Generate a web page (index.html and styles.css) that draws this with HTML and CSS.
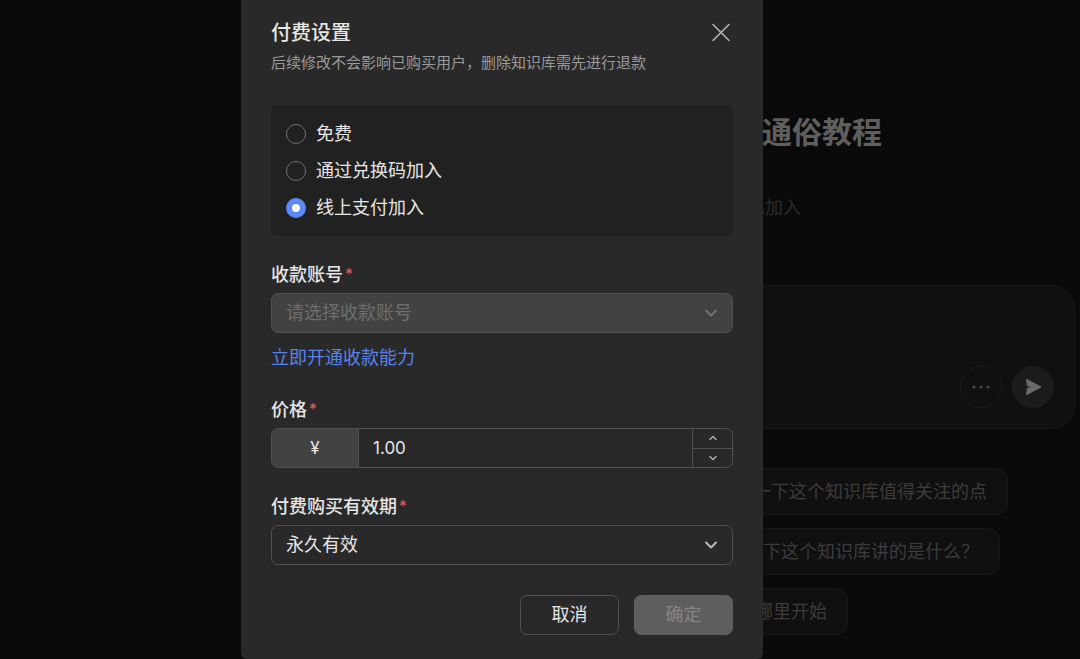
FILE: index.html
```
<!DOCTYPE html>
<html lang="zh-CN">
  <head>
    <meta charset="UTF-8" />
    <meta name="viewport" content="width=device-width, initial-scale=1.0" />
    <title>付费设置</title>
    <link rel="stylesheet" href="styles.css">
  </head>
  <body>
    <main class="page">
      <h1 class="page-title">通俗教程</h1>
      <p class="page-status">已加入</p>
      <div class="composer">
        <button type="button" class="round-button" aria-label="更多">
          <svg width="20" height="20" viewBox="0 0 20 20" fill="currentColor">
            <circle cx="3" cy="10" r="1.5" />
            <circle cx="10" cy="10" r="1.5" />
            <circle cx="17" cy="10" r="1.5" />
          </svg>
        </button>
        <button type="button" class="round-button send" aria-label="发送">
          <svg width="20" height="20" viewBox="0 0 20 20" fill="currentColor" stroke="currentColor" stroke-width="1" stroke-linejoin="round">
            <path d="M3.5 2.3L18 10L3.5 17.7L4.5 11.2L12 10L4.5 8.8Z" />
          </svg>
        </button>
      </div>
      <div class="suggestions">
        <button type="button" class="chip chip-long">一下这个知识库值得关注的点</button>
        <button type="button" class="chip chip-medium">一下这个知识库讲的是什么？</button>
        <button type="button" class="chip chip-short">哪里开始</button>
      </div>
    </main>

    <div class="overlay">
      <form class="dialog" role="dialog" aria-labelledby="dialogTitle">
        <div class="dialog-header">
          <h2 id="dialogTitle">付费设置</h2>
          <button type="button" class="close-button" aria-label="关闭">
            <svg width="20" height="20" viewBox="0 0 20 20" fill="none" stroke="currentColor" stroke-width="1.6" stroke-linecap="round">
              <path d="M2 1.5L18 17.5M18 1.5L2 17.5" />
            </svg>
          </button>
        </div>
        <p class="dialog-hint">后续修改不会影响已购买用户，删除知识库需先进行退款</p>

        <div class="options">
          <label class="option"><input type="radio" name="payType" value="free" />免费</label>
          <label class="option"><input type="radio" name="payType" value="code" />通过兑换码加入</label>
          <label class="option"><input type="radio" name="payType" value="online" checked />线上支付加入</label>
        </div>

        <div class="field">
          <label for="account">收款账号<span class="required">*</span></label>
          <div class="select-box">
            <select id="account" disabled>
              <option>请选择收款账号</option>
            </select>
            <svg class="arrow" width="14" height="14" viewBox="0 0 14 14">
              <path d="M2 4.5L7 9.5L12 4.5" />
            </svg>
          </div>
          <a class="field-link" href="#">立即开通收款能力</a>
        </div>

        <div class="field">
          <label for="price">价格<span class="required">*</span></label>
          <div class="price-box">
            <span class="currency">¥</span>
            <input type="text" id="price" inputmode="decimal" value="1.00" />
            <div class="stepper">
              <button type="button" aria-label="增加">
                <svg width="10" height="6" viewBox="0 0 10 6"><path d="M1.5 4.8L5 1.4L8.5 4.8" /></svg>
              </button>
              <button type="button" aria-label="减少">
                <svg width="10" height="6" viewBox="0 0 10 6"><path d="M1.5 1.2L5 4.6L8.5 1.2" /></svg>
              </button>
            </div>
          </div>
        </div>

        <div class="field">
          <label for="period">付费购买有效期<span class="required">*</span></label>
          <div class="select-box">
            <select id="period">
              <option>永久有效</option>
            </select>
            <svg class="arrow" width="14" height="14" viewBox="0 0 14 14">
              <path d="M2 4.5L7 9.5L12 4.5" />
            </svg>
          </div>
        </div>

        <div class="actions">
          <button type="button" class="action-button">取消</button>
          <button type="submit" class="action-button confirm" disabled>确定</button>
        </div>
      </form>
    </div>
  </body>
</html>
```
FILE: styles.css
```
* {
  box-sizing: border-box;
}
body {
  margin: 0;
  min-height: 100vh;
  background-color: #0a0a0a;
  color: #e6e6e6;
  font-family: Inter, "Noto Sans CJK SC", sans-serif;
  font-size: 18px;
  line-height: 24px;
}
h1,
h2,
p {
  margin: 0;
}
button,
input,
select {
  margin: 0;
  font: inherit;
  color: inherit;
}
button {
  padding: 0;
  border: none;
  background: none;
  cursor: pointer;
}
svg {
  display: block;
}

/* page behind the dialog */
.page {
  padding: 112px 5px 0 720px;
}
.page-title {
  padding-left: 42px;
  font-size: 30px;
  line-height: 40px;
  color: #5e5e5e;
  white-space: nowrap;
}
.page-status {
  margin-top: 44px;
  padding-left: 27px;
  color: #2c2c2c;
}
.composer {
  display: flex;
  justify-content: flex-end;
  align-items: flex-end;
  gap: 10px;
  min-height: 144px;
  margin-top: 65px;
  padding: 20px;
  border: 1px solid #181818;
  border-radius: 24px;
  background-color: #101010;
}
.round-button {
  display: flex;
  justify-content: center;
  align-items: center;
  width: 42px;
  height: 42px;
  border: 1px solid #1d1d1d;
  border-radius: 50%;
  color: #484848;
}
.round-button.send {
  background-color: #1c1c1c;
  color: #6a6a6a;
}
.suggestions {
  display: flex;
  flex-direction: column;
  align-items: flex-start;
  gap: 13px;
  margin-top: 39px;
}
.chip {
  height: 47px;
  padding: 0 20px;
  border: 1px solid #181818;
  border-radius: 12px;
  background-color: #101010;
  color: #3c3c3c;
  text-align: right;
  white-space: nowrap;
}
.chip-long {
  min-width: 288px;
}
.chip-medium {
  min-width: 280px;
}
.chip-short {
  min-width: 128px;
}

/* dialog */
.overlay {
  position: fixed;
  inset: 0;
  display: flex;
  justify-content: center;
  align-items: flex-start;
  padding-right: 76px;
  overflow: auto;
}
.dialog {
  width: 522px;
  padding: 19px 30px 24px;
  border-radius: 0 0 6px 6px;
  background-color: #292929;
}
.dialog-header {
  display: flex;
  justify-content: space-between;
  align-items: center;
}
.dialog-header h2 {
  font-size: 20px;
  font-weight: 500;
  line-height: 28px;
}
.close-button {
  padding: 2px;
  color: #b4b4b4;
}
.dialog-hint {
  margin-top: 5px;
  font-size: 15px;
  line-height: 22px;
  color: #999;
}
.options {
  display: flex;
  flex-direction: column;
  gap: 10px;
  margin-top: 31px;
  padding: 15px;
  border-radius: 6px;
  background-color: #212121;
}
.option {
  display: flex;
  align-items: center;
  gap: 10px;
  line-height: 27px;
}
.option input {
  appearance: none;
  width: 20px;
  height: 20px;
  border: 1px solid #707070;
  border-radius: 50%;
}
.option input:checked {
  border: 6px solid #5b89f8;
  background-color: #fff;
}
.field {
  display: flex;
  flex-direction: column;
  gap: 6px;
  margin-top: 27px;
}
.field label {
  font-weight: 500;
}
.required {
  margin-left: 2px;
  font-size: 15px;
  line-height: 1;
  vertical-align: 2px;
  color: #e25a50;
}
.select-box {
  position: relative;
}
.select-box select {
  appearance: none;
  display: block;
  width: 100%;
  height: 40px;
  padding: 0 40px 0 14px;
  border: 1px solid #505050;
  border-radius: 7px;
  background-color: transparent;
}
.select-box select:disabled {
  background-color: #424242;
  color: #6e6e6e;
  opacity: 1;
}
.arrow {
  position: absolute;
  top: 13px;
  right: 15px;
  fill: none;
  stroke: #bcbcbc;
  stroke-width: 2;
  stroke-linecap: round;
  stroke-linejoin: round;
  pointer-events: none;
}
select:disabled + .arrow {
  stroke: #707070;
}
.field-link {
  align-self: flex-start;
  margin-top: 6px;
  line-height: 26px;
  color: #5683f0;
  text-decoration: none;
}
.price-box {
  display: flex;
  height: 40px;
  border: 1px solid #505050;
  border-radius: 7px;
  font-size: 17px;
  overflow: hidden;
}
.currency {
  display: flex;
  justify-content: center;
  align-items: center;
  width: 87px;
  border-right: 1px solid #505050;
  background-color: #424242;
}
.price-box input {
  flex: 1;
  min-width: 0;
  padding: 0 14px;
  border: none;
  outline: none;
  background: none;
}
.stepper {
  display: flex;
  flex-direction: column;
  width: 40px;
  border-left: 1px solid #505050;
}
.stepper button {
  flex: 1;
  display: flex;
  justify-content: center;
  align-items: center;
}
.stepper button + button {
  border-top: 1px solid #505050;
}
.stepper svg {
  fill: none;
  stroke: #b0b0b0;
  stroke-width: 1.4;
}
.actions {
  display: flex;
  justify-content: flex-end;
  gap: 15px;
  margin-top: 30px;
}
.action-button {
  width: 99px;
  height: 40px;
  border: 1px solid #505050;
  border-radius: 7px;
}
.action-button.confirm {
  border-color: #5e5e5e;
  background-color: #5e5e5e;
  color: #858585;
  cursor: not-allowed;
}
```
